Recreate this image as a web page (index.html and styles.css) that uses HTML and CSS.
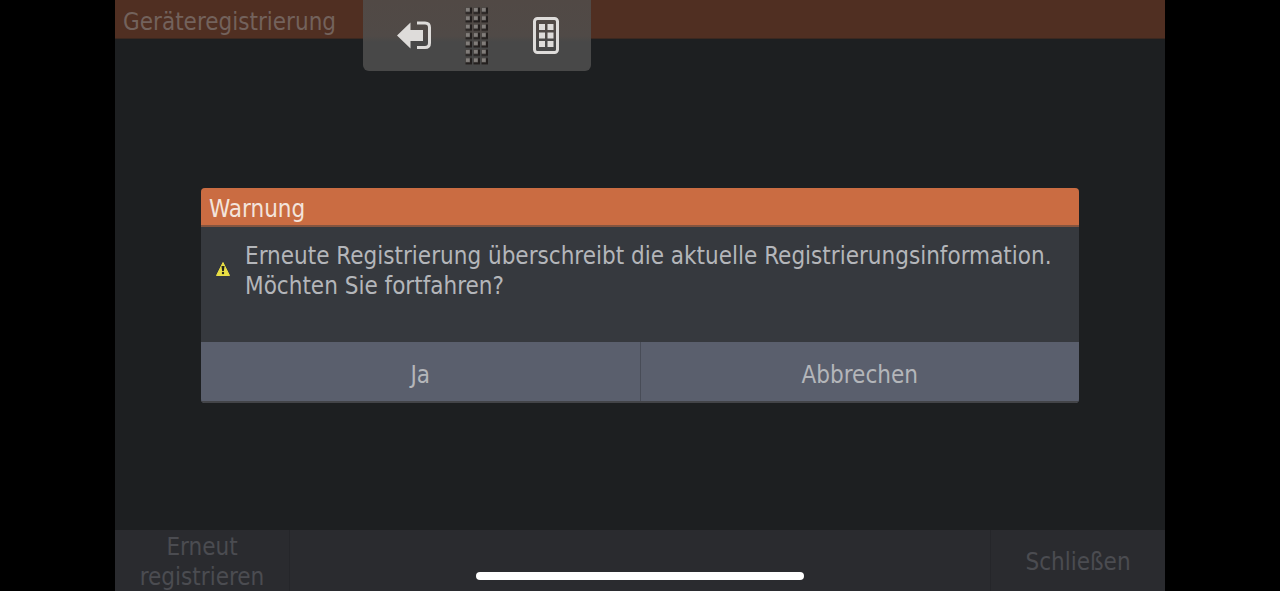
FILE: index.html
```html
<!DOCTYPE html>
<html lang="de">
  <head>
    <meta charset="utf-8">
    <title>Geräteregistrierung</title>
    <link rel="stylesheet" href="styles.css">
  </head>
  <body>
    <div class="screen">
      <header class="titlebar">
        <h1>Geräteregistrierung</h1>
      </header>
      <main class="content"></main>
      <footer class="actions">
        <button class="action" type="button">Erneut registrieren</button>
        <button class="action" type="button">Schließen</button>
      </footer>
    </div>

    <div class="overlay">
      <section class="dialog" role="alertdialog" aria-labelledby="dialog-title" aria-describedby="dialog-text">
        <h2 class="dialog-title" id="dialog-title">Warnung</h2>
        <div class="dialog-body">
          <svg class="warning" viewBox="0 0 16 16" aria-hidden="true">
            <path d="M8 1.5 14.5 14.5H1.5Z" fill="#e9df45" stroke="#e9df45" stroke-linejoin="round"/>
            <path d="M6.5 5h3L8.900 10H7.100Z" fill="#25251c"/>
            <circle cx="8" cy="12" r="1.2" fill="#25251c"/>
          </svg>
          <p id="dialog-text">Erneute Registrierung überschreibt die aktuelle Registrierungsinformation. Möchten Sie fortfahren?</p>
        </div>
        <div class="dialog-buttons">
          <button type="button">Ja</button>
          <button type="button">Abbrechen</button>
        </div>
      </section>
    </div>

    <div class="toolbar">
      <button type="button" aria-label="Beenden">
        <svg width="34" height="30" viewBox="1 0 34 30" aria-hidden="true">
          <path d="M1 14.500 14.500 1.500V9H27V20H14.500V27.500Z" fill="#dedcda"/>
          <path d="M21 2H29Q33.500 2 33.500 6.500V22Q33.500 26.500 29 26.500H21" fill="none" stroke="#dedcda" stroke-width="3"/>
        </svg>
      </button>
      <svg class="grip" width="24" height="58" aria-hidden="true">
        <defs>
          <pattern id="dots" width="8" height="8.400" patternUnits="userSpaceOnUse">
            <rect x="0.500" y="0.500" width="6.500" height="6.500" fill="#231f1e"/>
            <rect x="0.500" y="0.500" width="4.500" height="4.500" fill="#5f5b59"/>
            <rect x="1" y="1" width="3.500" height="3.500" fill="#827e7b"/>
          </pattern>
        </defs>
        <rect width="24" height="58" fill="url(#dots)"/>
      </svg>
      <button type="button" aria-label="Tastenfeld">
        <svg width="26" height="38" viewBox="0 0 26 38" aria-hidden="true">
          <rect x="1.500" y="1.500" width="23" height="34" rx="3" fill="none" stroke="#dedcda" stroke-width="3"/>
          <path d="M6 7h6v6H6zM14.500 7h6v6h-6zM6 15.500h6v6H6zM14.500 15.500h6v6h-6zM6 24h6v6H6zM14.500 24h6v6h-6z" fill="#dedcda"/>
        </svg>
      </button>
    </div>

    <div class="home-bar"></div>
  </body>
</html>
```

FILE: styles.css
```css
* {
  box-sizing: border-box;
}

body {
  margin: 0;
  height: 100vh;
  padding: 0 115px;
  background: #000;
  font-family: "DejaVu Sans Condensed", "DejaVu Sans", sans-serif;
  font-size: 24px;
  line-height: 30px;
  overflow: hidden;
}

h1,
h2,
p {
  margin: 0;
  font-size: inherit;
  font-weight: normal;
}

button {
  border: none;
  padding: 0;
  background: none;
  color: inherit;
  font: inherit;
}

.screen {
  display: flex;
  flex-direction: column;
  height: 100%;
  background: #1d1f21;
}

.titlebar {
  padding: 7px 8px 1px;
  background: #502f22;
  color: #73625c;
  border-bottom: 1px solid #3b2820;
}

.content {
  flex: 1;
}

.actions {
  display: flex;
  justify-content: space-between;
  height: 61px;
  background: #2a2b2f;
  color: #4b4c51;
}

.action {
  width: 175px;
  padding: 2px 16px 0;
  border-left: 1px solid #25262a;
}

.action:first-child {
  border-left: none;
  border-right: 1px solid #25262a;
}

.overlay {
  position: absolute;
  inset: 0 115px;
  display: flex;
  align-items: center;
  padding: 0 86px;
}

.dialog {
  width: 100%;
  border-radius: 4px;
  overflow: hidden;
  background: #36393e;
  color: #b4b6ba;
}

.dialog-title {
  padding: 6px 8px 1px;
  background: #ca6c42;
  border-bottom: 2px solid #84543f;
  color: #f3e4dc;
}

.dialog-body {
  display: flex;
  gap: 14px;
  min-height: 115px;
  padding: 14px 8px 14px 14px;
}

.warning {
  flex: none;
  width: 16px;
  height: 16px;
  margin-top: 20px;
}

.dialog-buttons {
  display: flex;
  border-bottom: 2px solid #434448;
  background: #5a5f6d;
}

.dialog-buttons button {
  flex: 1;
  height: 59px;
  padding-top: 6px;
}

.dialog-buttons button + button {
  border-left: 1px solid #484c57;
}

.toolbar {
  position: absolute;
  top: 0;
  left: 363px;
  display: flex;
  align-items: center;
  gap: 34px;
  width: 228px;
  height: 71px;
  padding: 0 34px;
  border-radius: 0 0 6px 6px;
  background: linear-gradient(#514945, #504a47 36px, #484848 42px, #484848);
}

.toolbar svg {
  display: block;
}

.grip {
  flex: none;
  margin-right: 10px;
}

.home-bar {
  position: absolute;
  bottom: 11px;
  left: 50%;
  width: 328px;
  height: 8px;
  margin-left: -164px;
  border-radius: 4px;
  background: #fff;
}
```
